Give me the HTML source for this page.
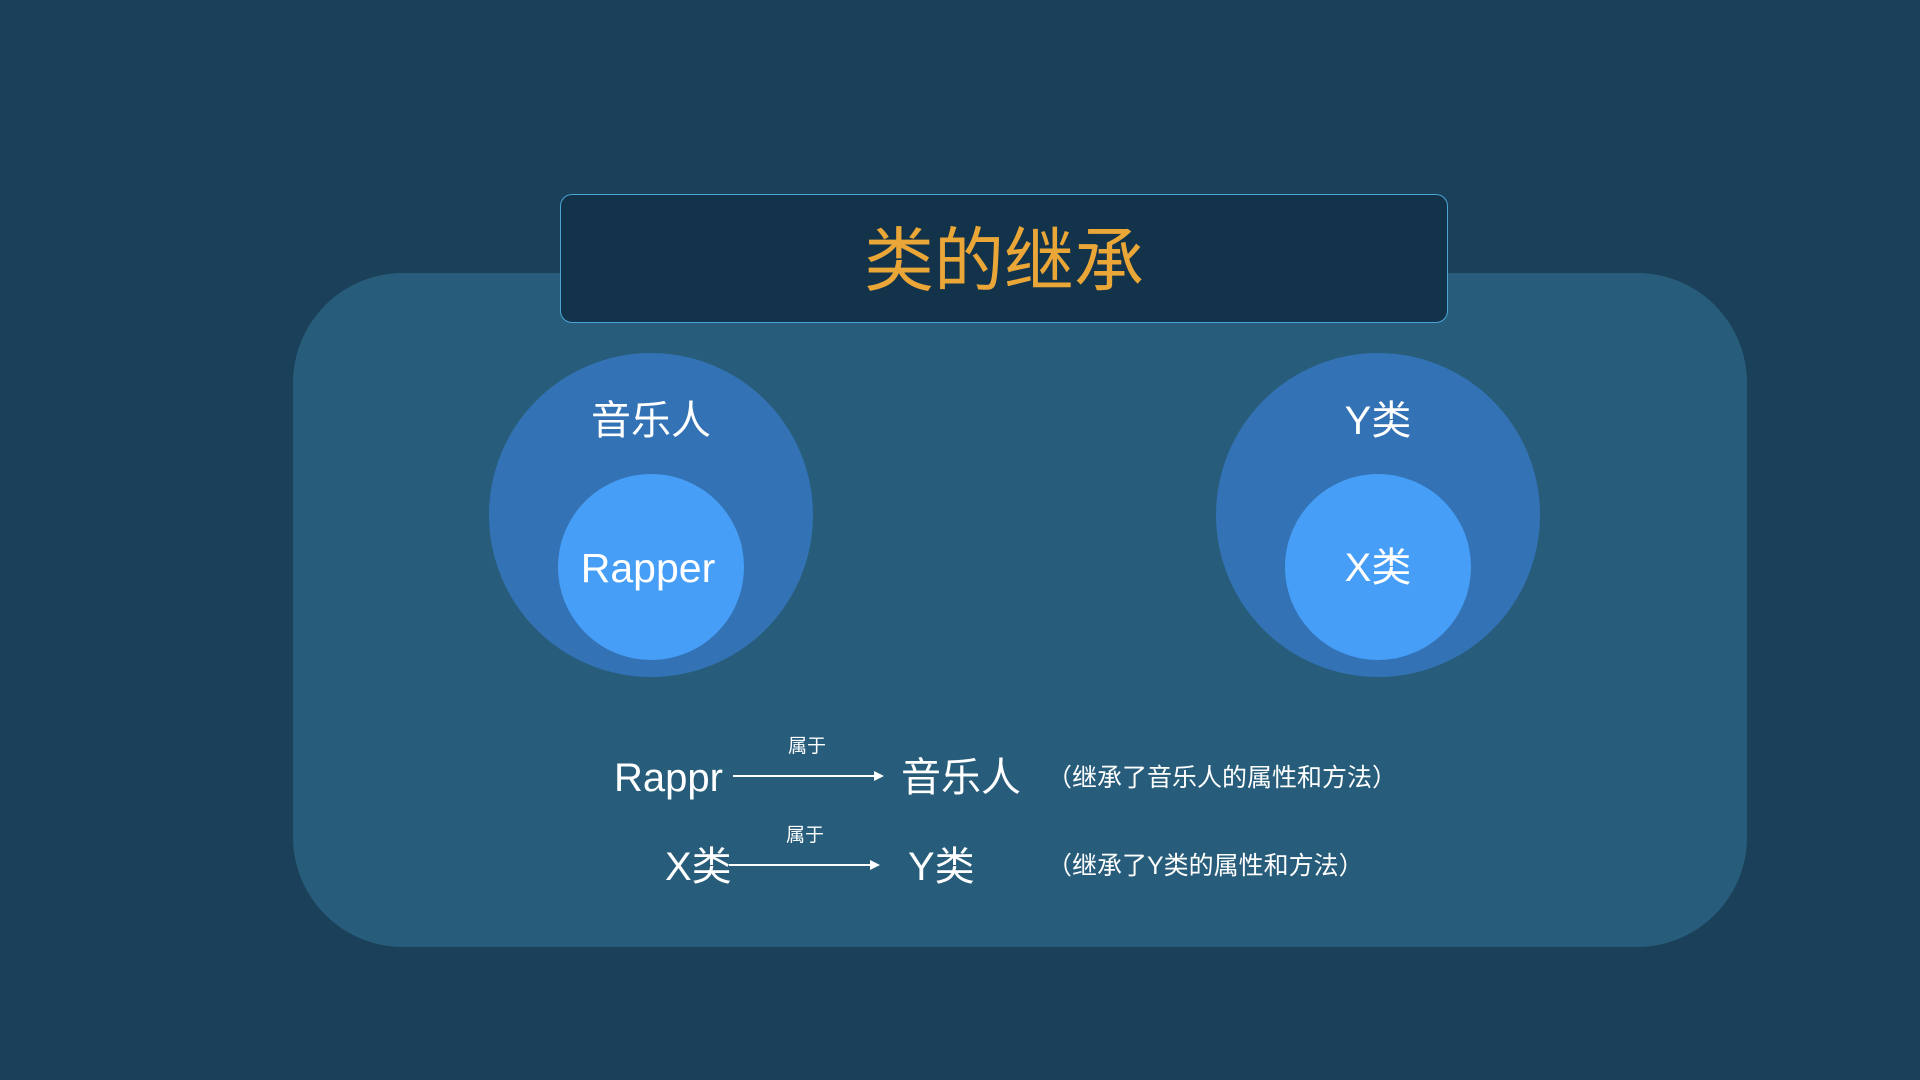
<!DOCTYPE html>
<html><head><meta charset="utf-8"><style>
body{margin:0;width:1920px;height:1080px;background:#1b405a;position:relative;overflow:hidden;font-family:"Liberation Sans","Noto Sans CJK SC",sans-serif;color:#fff}
.a{position:absolute;white-space:nowrap;line-height:1}
.c{position:absolute;border-radius:50%}
</style></head><body>
<div class="a" style="left:293px;top:273px;width:1454px;height:674px;background:#275d7b;border-radius:110px"></div>
<div class="a" style="left:560px;top:194px;width:886px;height:127px;background:#13334a;border:1.5px solid #4aa6d8;border-radius:12px"></div>
<div class="a" style="left:560px;top:226px;width:888px;text-align:center;font-size:70px;color:#eba638">类的继承</div>

<div class="c" style="left:489px;top:353px;width:324px;height:324px;background:#3373b5"></div>
<div class="c" style="left:558px;top:474px;width:186px;height:186px;background:#469ef7"></div>
<div class="a" style="left:489px;width:324px;text-align:center;top:401px;font-size:40px">音乐人</div>
<div class="a" style="left:486px;width:324px;text-align:center;top:548px;font-size:41px">Rapper</div>

<div class="c" style="left:1216px;top:353px;width:324px;height:324px;background:#3373b5"></div>
<div class="c" style="left:1285px;top:474px;width:186px;height:186px;background:#469ef7"></div>
<div class="a" style="left:1216px;width:324px;text-align:center;top:401px;font-size:40px">Y类</div>
<div class="a" style="left:1216px;width:324px;text-align:center;top:548px;font-size:40px">X类</div>

<div class="a" style="left:614px;top:758px;font-size:40px">Rappr</div>
<div class="a" style="left:733px;top:775px;width:146px;height:2px;background:#fff"></div>
<div class="a" style="left:874px;top:771px;width:0;height:0;border-left:10px solid #fff;border-top:5px solid transparent;border-bottom:5px solid transparent"></div>
<div class="a" style="left:788px;top:737px;font-size:19px">属于</div>
<div class="a" style="left:901px;top:758px;font-size:40px">音乐人</div>
<div class="a" style="left:1047px;top:766px;font-size:25px">（继承了音乐人的属性和方法）</div>

<div class="a" style="left:665px;top:847px;font-size:40px">X类</div>
<div class="a" style="left:729px;top:864px;width:146px;height:2px;background:#fff"></div>
<div class="a" style="left:870px;top:860px;width:0;height:0;border-left:10px solid #fff;border-top:5px solid transparent;border-bottom:5px solid transparent"></div>
<div class="a" style="left:786px;top:826px;font-size:19px">属于</div>
<div class="a" style="left:908px;top:847px;font-size:40px">Y类</div>
<div class="a" style="left:1047px;top:854px;font-size:25px">（继承了Y类的属性和方法）</div>
</body></html>
